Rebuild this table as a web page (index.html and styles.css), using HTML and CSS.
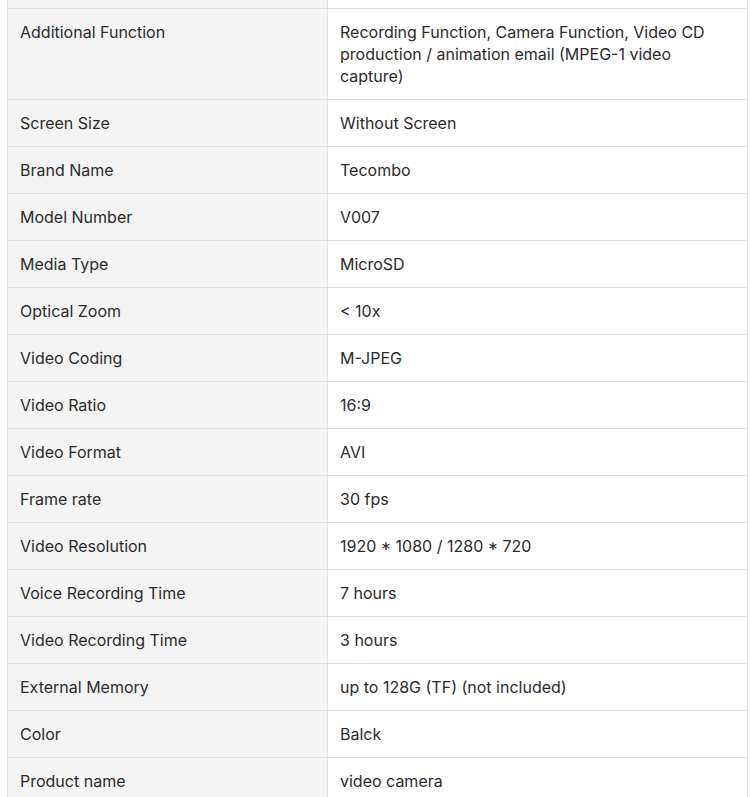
FILE: index.html
```html
<!DOCTYPE html>
<html lang="en">
<head>
<meta charset="utf-8">
<link rel="stylesheet" href="styles.css">
</head>
<body>
<table class="specs">
  <colgroup><col class="kcol"><col class="vcol"></colgroup>
  <tbody>
    <tr class="cut"><td class="key"></td><td class="val"></td></tr>
    <tr><td class="key">Additional Function</td><td class="val">Recording Function, Camera Function, Video CD production / animation email (MPEG-1 video capture)</td></tr>
    <tr><td class="key">Screen Size</td><td class="val">Without Screen</td></tr>
    <tr><td class="key">Brand Name</td><td class="val">Tecombo</td></tr>
    <tr><td class="key">Model Number</td><td class="val">V007</td></tr>
    <tr><td class="key">Media Type</td><td class="val">MicroSD</td></tr>
    <tr><td class="key">Optical Zoom</td><td class="val">&lt; 10x</td></tr>
    <tr><td class="key">Video Coding</td><td class="val">M-JPEG</td></tr>
    <tr><td class="key">Video Ratio</td><td class="val">16:9</td></tr>
    <tr><td class="key">Video Format</td><td class="val">AVI</td></tr>
    <tr><td class="key">Frame rate</td><td class="val">30 fps</td></tr>
    <tr><td class="key">Video Resolution</td><td class="val">1920 * 1080 / 1280 * 720</td></tr>
    <tr><td class="key">Voice Recording Time</td><td class="val">7 hours</td></tr>
    <tr><td class="key">Video Recording Time</td><td class="val">3 hours</td></tr>
    <tr><td class="key">External Memory</td><td class="val">up to 128G (TF) (not included)</td></tr>
    <tr><td class="key">Color</td><td class="val">Balck</td></tr>
    <tr><td class="key">Product name</td><td class="val">video camera</td></tr>
  </tbody>
</table>
</body>
</html>
```
FILE: styles.css
```css
html, body {
  margin: 0;
  padding: 0;
  background: #ffffff;
}
body {
  font-family: Inter, "Noto Sans", sans-serif;
  font-size: 16px;
  line-height: 22px;
  color: #2b2b2b;
  overflow: hidden;
}
.specs {
  margin: 0 0 0 7px;
  width: 741px;
  border-collapse: collapse;
  table-layout: fixed;
}
.specs .kcol {
  width: 320px;
}
.specs td {
  border: 1px solid #e0e0e0;
  padding: 12px;
  vertical-align: top;
}
.specs .key {
  background: #f4f4f4;
}
.specs .val {
  background: #ffffff;
}
.specs .cut td {
  border-top-style: hidden;
  height: 8px;
  padding: 0;
}
```
